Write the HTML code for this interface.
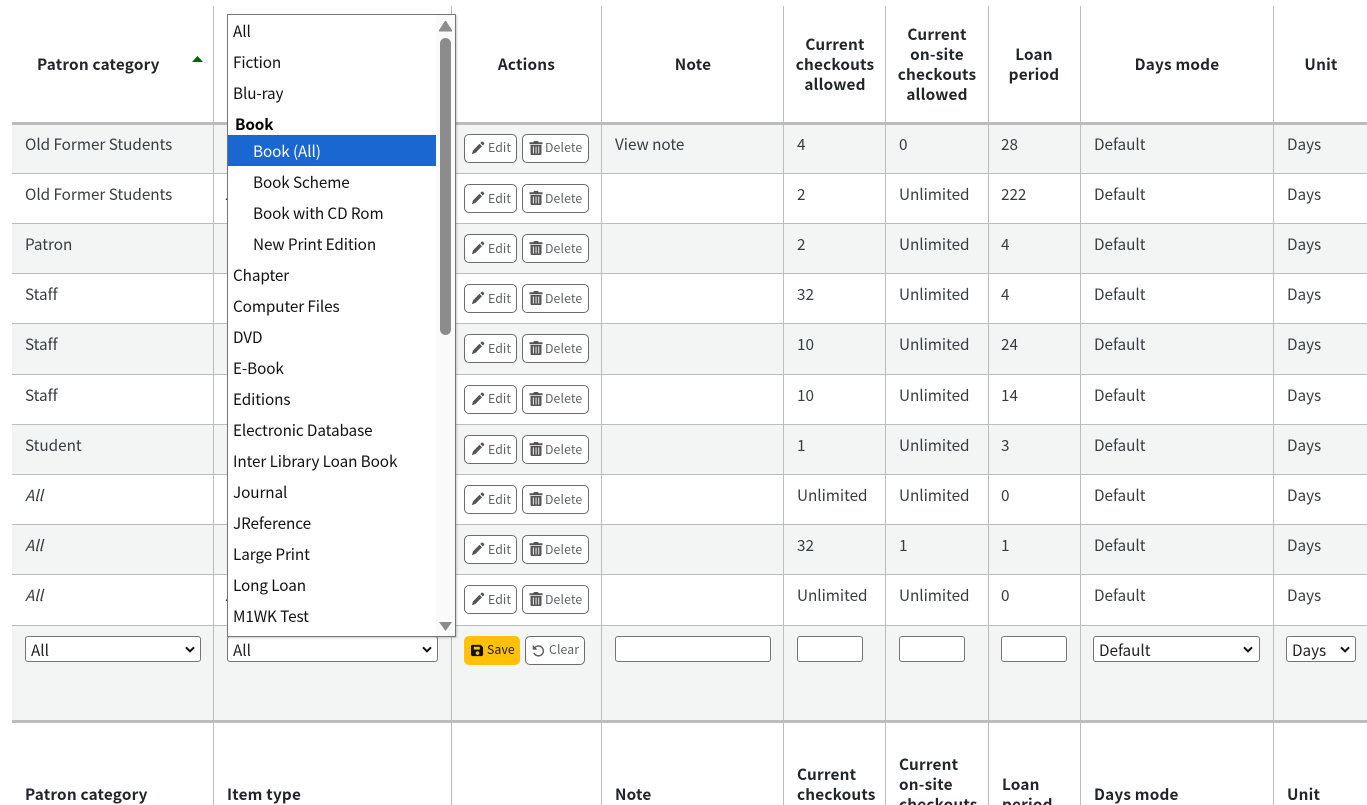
<!DOCTYPE html>
<html lang="en"><head><meta charset="utf-8"><title>Circulation rules</title>
<style>
html{margin:0;padding:0;background:#fff;overflow:hidden;width:1367px;height:805px}
body{margin:0;padding:0;background:#fff;position:relative;width:1367px;height:805px;overflow:hidden;font-family:"Noto Sans CJK JP","Liberation Sans",sans-serif;font-size:15.3px;letter-spacing:-.03px;color:#363d40}
.r{position:absolute;left:12px;width:1355px}
.g{background:#f3f4f4}
.h{position:absolute;left:12px;width:1355px;height:1px;background:#bcbcbc}
.h2{height:3px}
.v{position:absolute;top:6px;width:1px;height:799px;background:#bcbcbc}
.t{position:absolute;white-space:nowrap;line-height:20px;height:20px}
b,.b{font-weight:700;color:#1f2528;letter-spacing:.2px}
.c{transform:translateX(-50%);text-align:center}
i{font-style:italic}
.btn{position:absolute;box-sizing:border-box;height:29px;border:1px solid #6c6c6c;border-radius:5px;background:#fff;font-size:12.3px;line-height:27px;color:#5f6567;white-space:nowrap;letter-spacing:.1px}
.btn svg{position:absolute;top:6px;left:6px;width:14px;height:14px;fill:#555}
.btn span{position:absolute;top:0}
.btn.u span{top:-1px}
.e{left:464px;width:53px}.e span{left:23px}
.d{left:522px;width:67px}.d span{left:22px}
select,input{position:absolute;box-sizing:border-box;top:636px;height:26px;border:1px solid #767676;border-radius:3px;background:#fff;font-family:inherit;font-size:15.3px;letter-spacing:-.03px;color:#222;margin:0}
select{appearance:none;-webkit-appearance:none;padding:2px 0 0 5px}
input{padding:0 0 0 2px}
.ch{position:absolute;top:646px;width:10px;height:7px}
#dd{position:absolute;left:227px;top:14px;width:229px;height:623px;box-sizing:border-box;border:1px solid #767676;background:#fff;box-shadow:1px 1px 2px rgba(0,0,0,.2);overflow:hidden;color:#111;letter-spacing:-.1px}
#dd .o{position:absolute;left:5px;height:31px;line-height:31px;white-space:nowrap}
#dd .s{left:25px}
#dd .sel{position:absolute;left:0;top:120px;width:208px;height:31px;background:#1a67d2}
#sb{position:absolute;left:208px;top:0;width:19px;height:621px;background:#fafafa}
#th{position:absolute;left:4px;top:23px;width:11px;height:297px;background:#8c8c8c;border-radius:6px}
</style></head><body>
<svg width="0" height="0" style="position:absolute"><defs>
<symbol id="pen" viewBox="0 0 13 14"><path d="M10 .8c.4-.4 1-.4 1.400 0l1.100 1.100c.4.400.4 1 0 1.400L11.300 4.500 8.800 2zM8 2.800l2.500 2.500L4.200 11.800.3 13.300 1.600 9.300z"/></symbol>
<symbol id="tr" viewBox="0 0 14 14"><path d="M5 0h4l.7 1.300H13.500v1.900H.5V1.300h3.800zM1.500 4h11v8.700c0 .7-.6 1.300-1.300 1.300H2.800C2.100 14 1.500 13.400 1.500 12.700zM3.900 5.500v7h.9v-7zm2.700 0v7h.9v-7zm2.700 0v7h.9v-7z"/></symbol>
<symbol id="sv" viewBox="0 0 14 14"><path d="M1.500 1H10.500L13 3.500V11.500c0 .8-.7 1.500-1.500 1.500H1.500C.7 13 0 12.300 0 11.500v-9C0 1.700.7 1 1.500 1zM3 3v3h6.500V3zM7 7.800a2 2 0 1 0 .01 0z"/></symbol>
<symbol id="un" viewBox="0 0 14 14"><path fill="none" stroke="#5c5c5c" stroke-width="1.500" d="M2.500 4.500A5.300 5.300 0 1 1 2 9.500"/><path d="M.8 1v5h5z"/></symbol>
<symbol id="cv" viewBox="0 0 10 7"><path d="M1 1.300 5 5.300 9 1.300" fill="none" stroke="#111" stroke-width="2"/></symbol>
</defs></svg>

<div class="r g" style="top:124px;height:49px"></div>
<div class="r g" style="top:224px;height:49px"></div>
<div class="r g" style="top:324px;height:50px"></div>
<div class="r g" style="top:425px;height:49px"></div>
<div class="r g" style="top:525px;height:49px"></div>
<div class="r g" style="top:626px;height:94px"></div>

<div class="h h2" style="top:122px"></div>
<div class="h" style="top:173px"></div><div class="h" style="top:223px"></div><div class="h" style="top:273px"></div>
<div class="h" style="top:323px"></div><div class="h" style="top:374px"></div><div class="h" style="top:424px"></div>
<div class="h" style="top:474px"></div><div class="h" style="top:524px"></div><div class="h" style="top:574px"></div>
<div class="h" style="top:625px"></div><div class="h h2" style="top:720px"></div>
<div class="v" style="left:213px"></div><div class="v" style="left:451px"></div><div class="v" style="left:601px"></div>
<div class="v" style="left:783px"></div><div class="v" style="left:885px"></div><div class="v" style="left:988px"></div>
<div class="v" style="left:1080px"></div><div class="v" style="left:1273px"></div>

<!-- header -->
<b class="t" style="left:37px;top:54px">Patron category</b>
<svg style="position:absolute;left:192px;top:56px" width="11" height="7"><path d="M5.500 0 11 6H0z" fill="#006400"/></svg>
<b class="t c" style="left:526.500px;top:54px">Actions</b>
<b class="t c" style="left:693px;top:54px">Note</b>
<b class="t c" style="left:835px;top:34px">Current</b><b class="t c" style="left:835px;top:54px">checkouts</b><b class="t c" style="left:835px;top:74px">allowed</b>
<b class="t c" style="left:937px;top:24px">Current</b><b class="t c" style="left:937px;top:44px">on-site</b><b class="t c" style="left:937px;top:64px">checkouts</b><b class="t c" style="left:937px;top:84px">allowed</b>
<b class="t c" style="left:1034px;top:44px">Loan</b><b class="t c" style="left:1034px;top:64px">period</b>
<b class="t c" style="left:1177px;top:54px">Days mode</b>
<b class="t c" style="left:1321px;top:54px">Unit</b>

<!-- row 1 -->
<span class="t" style="left:25px;top:134px">Old Former Students</span><span class="t" style="left:615px;top:134px">View note</span><span class="t" style="left:797px;top:134px">4</span><span class="t" style="left:899px;top:134px">0</span><span class="t" style="left:1001px;top:134px">28</span><span class="t" style="left:1094px;top:134px">Default</span><span class="t" style="left:1287px;top:134px">Days</span>
<a class="btn e u" style="top:134px"><svg><use href="#pen"/></svg><span>Edit</span></a><a class="btn d u" style="top:134px"><svg><use href="#tr"/></svg><span>Delete</span></a>
<!-- row 2 -->
<span class="t" style="left:25px;top:184px">Old Former Students</span><i class="t" style="left:225.500px;top:184px">All</i><span class="t" style="left:797px;top:184px">2</span><span class="t" style="left:899px;top:184px">Unlimited</span><span class="t" style="left:1001px;top:184px">222</span><span class="t" style="left:1094px;top:184px">Default</span><span class="t" style="left:1287px;top:184px">Days</span>
<a class="btn e" style="top:184px"><svg><use href="#pen"/></svg><span>Edit</span></a><a class="btn d" style="top:184px"><svg><use href="#tr"/></svg><span>Delete</span></a>
<!-- row 3 -->
<span class="t" style="left:25px;top:234px">Patron</span><span class="t" style="left:797px;top:234px">2</span><span class="t" style="left:899px;top:234px">Unlimited</span><span class="t" style="left:1001px;top:234px">4</span><span class="t" style="left:1094px;top:234px">Default</span><span class="t" style="left:1287px;top:234px">Days</span>
<a class="btn e" style="top:234px"><svg><use href="#pen"/></svg><span>Edit</span></a><a class="btn d" style="top:234px"><svg><use href="#tr"/></svg><span>Delete</span></a>
<!-- row 4 -->
<span class="t" style="left:25px;top:284px">Staff</span><span class="t" style="left:797px;top:284px">32</span><span class="t" style="left:899px;top:284px">Unlimited</span><span class="t" style="left:1001px;top:284px">4</span><span class="t" style="left:1094px;top:284px">Default</span><span class="t" style="left:1287px;top:284px">Days</span>
<a class="btn e" style="top:284px"><svg><use href="#pen"/></svg><span>Edit</span></a><a class="btn d" style="top:284px"><svg><use href="#tr"/></svg><span>Delete</span></a>
<!-- row 5 -->
<span class="t" style="left:25px;top:334px">Staff</span><span class="t" style="left:797px;top:334px">10</span><span class="t" style="left:899px;top:334px">Unlimited</span><span class="t" style="left:1001px;top:334px">24</span><span class="t" style="left:1094px;top:334px">Default</span><span class="t" style="left:1287px;top:334px">Days</span>
<a class="btn e" style="top:334px"><svg><use href="#pen"/></svg><span>Edit</span></a><a class="btn d" style="top:334px"><svg><use href="#tr"/></svg><span>Delete</span></a>
<!-- row 6 -->
<span class="t" style="left:25px;top:385px">Staff</span><span class="t" style="left:797px;top:385px">10</span><span class="t" style="left:899px;top:385px">Unlimited</span><span class="t" style="left:1001px;top:385px">14</span><span class="t" style="left:1094px;top:385px">Default</span><span class="t" style="left:1287px;top:385px">Days</span>
<a class="btn e u" style="top:385px"><svg><use href="#pen"/></svg><span>Edit</span></a><a class="btn d u" style="top:385px"><svg><use href="#tr"/></svg><span>Delete</span></a>
<!-- row 7 -->
<span class="t" style="left:25px;top:435px">Student</span><span class="t" style="left:797px;top:435px">1</span><span class="t" style="left:899px;top:435px">Unlimited</span><span class="t" style="left:1001px;top:435px">3</span><span class="t" style="left:1094px;top:435px">Default</span><span class="t" style="left:1287px;top:435px">Days</span>
<a class="btn e" style="top:435px"><svg><use href="#pen"/></svg><span>Edit</span></a><a class="btn d" style="top:435px"><svg><use href="#tr"/></svg><span>Delete</span></a>
<!-- row 8 -->
<i class="t" style="left:25px;top:485px">All</i><span class="t" style="left:797px;top:485px">Unlimited</span><span class="t" style="left:899px;top:485px">Unlimited</span><span class="t" style="left:1001px;top:485px">0</span><span class="t" style="left:1094px;top:485px">Default</span><span class="t" style="left:1287px;top:485px">Days</span>
<a class="btn e" style="top:485px"><svg><use href="#pen"/></svg><span>Edit</span></a><a class="btn d" style="top:485px"><svg><use href="#tr"/></svg><span>Delete</span></a>
<!-- row 9 -->
<i class="t" style="left:25px;top:535px">All</i><span class="t" style="left:797px;top:535px">32</span><span class="t" style="left:899px;top:535px">1</span><span class="t" style="left:1001px;top:535px">1</span><span class="t" style="left:1094px;top:535px">Default</span><span class="t" style="left:1287px;top:535px">Days</span>
<a class="btn e" style="top:535px"><svg><use href="#pen"/></svg><span>Edit</span></a><a class="btn d" style="top:535px"><svg><use href="#tr"/></svg><span>Delete</span></a>
<!-- row 10 -->
<i class="t" style="left:25px;top:585px">All</i><i class="t" style="left:225.500px;top:585px">All</i><span class="t" style="left:797px;top:585px">Unlimited</span><span class="t" style="left:899px;top:585px">Unlimited</span><span class="t" style="left:1001px;top:585px">0</span><span class="t" style="left:1094px;top:585px">Default</span><span class="t" style="left:1287px;top:585px">Days</span>
<a class="btn e" style="top:585px"><svg><use href="#pen"/></svg><span>Edit</span></a><a class="btn d" style="top:585px"><svg><use href="#tr"/></svg><span>Delete</span></a>

<!-- form row -->
<select style="left:25px;width:176px"><option>All</option></select><svg class="ch" style="left:185px"><use href="#cv"/></svg>
<select style="left:227px;width:211px"><option>All</option></select><svg class="ch" style="left:422px"><use href="#cv"/></svg>
<input type="text" style="left:615px;width:156px">
<input type="text" style="left:797px;width:66px">
<input type="text" style="left:899px;width:66px">
<input type="text" style="left:1001px;width:66px">
<select style="left:1093px;width:167px"><option>Default</option></select><svg class="ch" style="left:1243px"><use href="#cv"/></svg>
<select style="left:1286px;width:70px"><option>Days</option></select><svg class="ch" style="left:1340px"><use href="#cv"/></svg>
<a class="btn u" style="left:464px;top:636px;width:56px;background:#ffc107;border-color:#ffc107;color:#1a1a1a"><svg style="width:13px;height:13px;top:7px;left:6px;fill:#111"><use href="#sv"/></svg><span style="left:22px">Save</span></a>
<a class="btn u" style="left:525px;top:636px;width:60px"><svg style="width:13px;height:13px;top:7px;left:6px"><use href="#un"/></svg><span style="left:23px">Clear</span></a>

<!-- footer -->
<b class="t" style="left:25px;top:784px">Patron category</b>
<b class="t" style="left:227px;top:784px">Item type</b>
<b class="t" style="left:615px;top:784px">Note</b>
<b class="t" style="left:797px;top:764px">Current</b><b class="t" style="left:797px;top:784px">checkouts</b>
<b class="t" style="left:899px;top:754px">Current</b><b class="t" style="left:899px;top:774px">on-site</b><b class="t" style="left:899px;top:794px">checkouts</b>
<b class="t" style="left:1002px;top:774px">Loan</b><b class="t" style="left:1002px;top:794px">period</b>
<b class="t" style="left:1094px;top:784px">Days mode</b>
<b class="t" style="left:1287px;top:784px">Unit</b>

<!-- open dropdown -->
<div id="dd">
<div class="sel"></div>
<div class="o" style="top:1px">All</div>
<div class="o" style="top:32px">Fiction</div>
<div class="o" style="top:63px">Blu-ray</div>
<div class="o" style="top:94px;left:7px;font-weight:700;color:#000">Book</div>
<div class="o s" style="top:121px;color:#fff">Book (All)</div>
<div class="o s" style="top:152px">Book Scheme</div>
<div class="o s" style="top:183px">Book with CD Rom</div>
<div class="o s" style="top:214px">New Print Edition</div>
<div class="o" style="top:245px">Chapter</div>
<div class="o" style="top:276px">Computer Files</div>
<div class="o" style="top:307px">DVD</div>
<div class="o" style="top:338px">E-Book</div>
<div class="o" style="top:369px">Editions</div>
<div class="o" style="top:400px">Electronic Database</div>
<div class="o" style="top:431px">Inter Library Loan Book</div>
<div class="o" style="top:462px">Journal</div>
<div class="o" style="top:493px">JReference</div>
<div class="o" style="top:524px">Large Print</div>
<div class="o" style="top:555px">Long Loan</div>
<div class="o" style="top:586px">M1WK Test</div>
<div id="sb"><div id="th"></div>
<svg style="position:absolute;left:3px;top:6px" width="13" height="11"><path d="M6.500 0 13 10H0z" fill="#8c8c8c" stroke="#8c8c8c" stroke-linejoin="round"/></svg>
<svg style="position:absolute;left:3px;top:606px" width="13" height="11"><path d="M0 1H13L6.500 10z" fill="#8c8c8c"/></svg>
</div>
</div>
</body></html>
